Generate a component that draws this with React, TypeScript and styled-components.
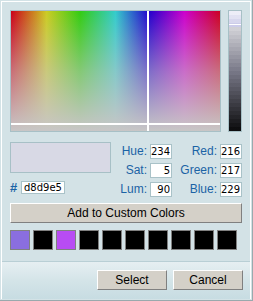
import React from 'react';
import styled, { createGlobalStyle } from 'styled-components';

const GlobalStyle = createGlobalStyle`
  html, body {
    margin: 0;
    padding: 0;
    background: #ffffff;
  }
  * {
    box-sizing: border-box;
  }
`;

const Window = styled.div`
  width: 253px;
  height: 301px;
  padding: 1px;
  background: #d3e2e6;
  border-right: 1px solid #9aa9ad;
  border-bottom: 1px solid #9aa9ad;
  font-family: 'Liberation Sans', Arial, sans-serif;
`;

const Panel = styled.div`
  height: 100%;
  display: flex;
  flex-direction: column;
  border: 1px solid #ffffff;
  border-bottom: none;
`;

const Body = styled.div`
  padding: 8px 8px 11px 8px;
  display: flex;
  flex-direction: column;
  border-bottom: 1px solid #b9cfd5;
`;

const TopRow = styled.div`
  display: flex;
  gap: 7px;
`;

const Spectrum = styled.div`
  position: relative;
  width: 211px;
  height: 122px;
  border: 1px solid #a7c0c6;
  background:
    linear-gradient(to bottom, rgba(200, 198, 198, 0) 0%, rgba(200, 198, 198, 0.55) 50%, rgba(200, 198, 198, 1) 100%),
    linear-gradient(
      to right,
      #cc0018 0%,
      #cccc22 17%,
      #33cc11 33%,
      #33cccc 50%,
      #2200cc 66%,
      #cc00cc 83%,
      #cc0022 100%
    );
`;

const CrossV = styled.div<{ $x: number }>`
  position: absolute;
  top: 0;
  bottom: 0;
  left: ${(p) => p.$x}px;
  width: 2px;
  background: #ffffff;
`;

const CrossH = styled.div<{ $y: number }>`
  position: absolute;
  left: 0;
  right: 0;
  top: ${(p) => p.$y}px;
  height: 2px;
  background: #ffffff;
`;

const LumBar = styled.div`
  position: relative;
  width: 14px;
  height: 122px;
  border: 1px solid #a7c0c6;
`;

const LumMarker = styled.div<{ $y: number }>`
  position: absolute;
  left: 0;
  right: 0;
  top: ${(p) => p.$y}px;
  height: 1px;
  background: #ffffff;
`;

const MiddleRow = styled.div`
  display: flex;
  margin-top: 10px;
`;

const LeftCol = styled.div`
  display: flex;
  flex-direction: column;
  width: 101px;
`;

const Preview = styled.div<{ $color: string }>`
  width: 101px;
  height: 31px;
  background: ${(p) => p.$color};
  border: 1px solid #a7c0c6;
`;

const HexRow = styled.div`
  display: flex;
  align-items: center;
  margin-top: 8px;
  gap: 4px;
`;

const Hash = styled.span`
  color: #1b63a5;
  font-size: 13px;
  font-weight: bold;
  width: 7px;
  line-height: 13px;
`;

const Field = styled.input<{ $w: number; $h: number; $align: string }>`
  width: ${(p) => p.$w}px;
  height: ${(p) => p.$h}px;
  margin: 0;
  padding: 0 1px 0 2px;
  border: 1px solid #a9c2c8;
  background: #ffffff;
  font-family: 'DejaVu Sans', Verdana, sans-serif;
  font-size: 10px;
  color: #000000;
  text-align: ${(p) => p.$align};
  outline: none;
`;

const NumField = styled(Field)`
  padding: 0 1px 0 0;
`;

const ValueGrid = styled.div`
  display: grid;
  grid-template-columns: 36px 22px 42px 22px;
  grid-auto-rows: 15px;
  column-gap: 3px;
  row-gap: 4px;
  margin-top: 2px;
`;

const Label = styled.label`
  color: #1b63a5;
  font-size: 12px;
  line-height: 15px;
  text-align: right;
  white-space: nowrap;
`;

const Button = styled.button<{ $w: number }>`
  width: ${(p) => p.$w}px;
  height: 20px;
  margin: 0;
  padding: 0;
  background: #d4d0c8;
  border: 1px solid;
  border-color: #ffffff #808080 #808080 #ffffff;
  font-family: 'Liberation Sans', Arial, sans-serif;
  font-size: 12px;
  color: #000000;
`;

const AddButton = styled(Button)`
  margin-top: 6px;
`;

const Swatches = styled.div`
  display: flex;
  gap: 3px;
  margin-top: 7px;
`;

const Swatch = styled.div<{ $color: string }>`
  width: 20px;
  height: 20px;
  background: ${(p) => p.$color};
  border: 1px solid #808080;
`;

const Footer = styled.div`
  flex: 1;
  display: flex;
  justify-content: flex-end;
  align-items: flex-start;
  gap: 6px;
  padding: 8px 7px 0 0;
  background: linear-gradient(to bottom, #e6eff2 0%, #d4e4e8 50%, #c7dce2 100%);
`;

const lumBands = (() => {
  const n = 30;
  const stops: string[] = [];
  for (let i = 0; i < n; i++) {
    const l = 95 - (i * 89) / (n - 1);
    const c = `hsl(240, ${i < 4 ? 40 : 6}%, ${l.toFixed(1)}%)`;
    stops.push(`${c} ${((i * 100) / n).toFixed(2)}%`, `${c} ${(((i + 1) * 100) / n).toFixed(2)}%`);
  }
  return `linear-gradient(to bottom, ${stops.join(', ')})`;
})();

const values = [
  ['Hue:', '234', 'Red:', '216'],
  ['Sat:', '5', 'Green:', '217'],
  ['Lum:', '90', 'Blue:', '229'],
];

const customColors = [
  '#8a6ee0',
  '#000000',
  '#b84cf4',
  '#000000',
  '#000000',
  '#000000',
  '#000000',
  '#000000',
  '#000000',
  '#000000',
];

export default function App() {
  return (
    <>
      <GlobalStyle />
      <Window>
        <Panel>
          <Body>
            <TopRow>
              <Spectrum>
                <CrossV $x={136} />
                <CrossH $y={112} />
              </Spectrum>
              <LumBar style={{ background: lumBands }}>
                <LumMarker $y={13} />
              </LumBar>
            </TopRow>

            <MiddleRow>
              <LeftCol>
                <Preview $color="#d8d9e5" />
                <HexRow>
                  <Hash>#</Hash>
                  <Field $w={44} $h={13} $align="left" defaultValue="d8d9e5" readOnly />
                </HexRow>
              </LeftCol>
              <ValueGrid>
                {values.map(([l1, v1, l2, v2]) => (
                  <React.Fragment key={l1}>
                    <Label>{l1}</Label>
                    <NumField $w={22} $h={15} $align="right" defaultValue={v1} readOnly />
                    <Label>{l2}</Label>
                    <NumField $w={22} $h={15} $align="right" defaultValue={v2} readOnly />
                  </React.Fragment>
                ))}
              </ValueGrid>
            </MiddleRow>

            <AddButton $w={232}>Add to Custom Colors</AddButton>

            <Swatches>
              {customColors.map((c, i) => (
                <Swatch key={i} $color={c} />
              ))}
            </Swatches>
          </Body>
          <Footer>
            <Button $w={70}>Select</Button>
            <Button $w={70}>Cancel</Button>
          </Footer>
        </Panel>
      </Window>
    </>
  );
}
